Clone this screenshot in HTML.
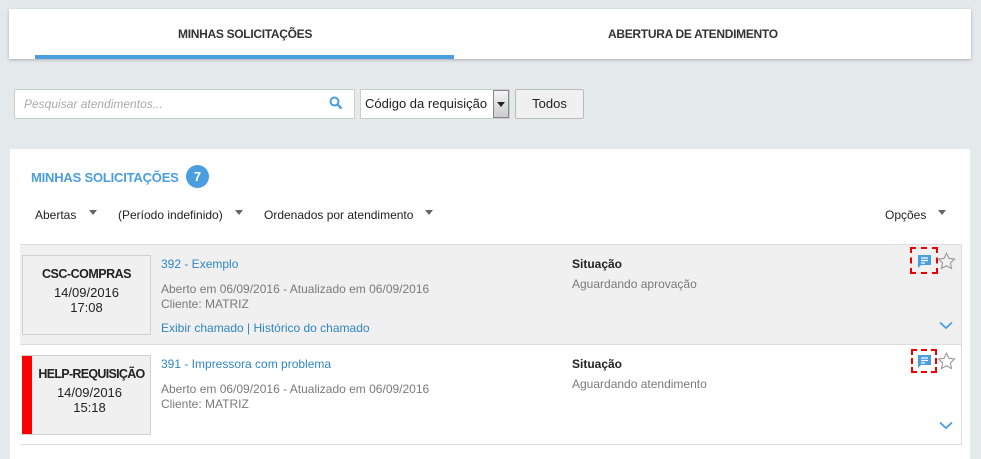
<!DOCTYPE html>
<html><head><meta charset="utf-8"><style>
*{margin:0;padding:0;box-sizing:border-box}
html,body{width:981px;height:450px}
body{background:#e4e9ec;font-family:"Liberation Sans",sans-serif;position:relative;overflow:hidden;color:#333}
.abs{position:absolute}
.tabs{left:9px;top:9px;width:962px;height:50px;background:#fff;box-shadow:0 1px 3px rgba(0,0,0,.25)}
.tab{font-weight:bold;font-size:12px;color:#333;letter-spacing:-.3px}
.card{left:10px;top:149px;width:960px;height:310px;background:#fff}
.blue{color:#2f86c4}
.gray{color:#7a7a7a}
.tri{display:inline-block;width:0;height:0;border-left:4px solid transparent;border-right:4px solid transparent;border-top:5px solid #666}
.datebox{width:129px;height:80px;background:#f0f0f0;border:1px solid #d0d0d0;text-align:center;font-size:13px;color:#222}
.f12{font-size:12px}
</style></head><body>
<div class="abs tabs"></div>
<div class="abs tab" style="left:178px;top:27px">MINHAS SOLICITAÇÕES</div>
<div class="abs tab" style="left:608px;top:27px">ABERTURA DE ATENDIMENTO</div>
<div class="abs" style="left:35px;top:55px;width:419px;height:4px;background:#4a9ee0"></div>

<div class="abs" style="left:14px;top:89px;width:341px;height:30px;background:#fff;border:1px solid #ccc;border-radius:2px"></div>
<div class="abs" style="left:24px;top:97px;font-size:12px;font-style:italic;color:#aaa">Pesquisar atendimentos...</div>
<svg class="abs" style="left:329px;top:96px" width="14" height="14" viewBox="0 0 14 14"><circle cx="5.5" cy="5.5" r="4" fill="none" stroke="#4a9ee0" stroke-width="2"/><path d="M8.5 8.5L12.5 12.5" stroke="#4a9ee0" stroke-width="2.4"/></svg>
<div class="abs" style="left:360px;top:89px;width:150px;height:30px;background:#fff;border:1px solid #ccc"></div>
<div class="abs" style="left:365px;top:96px;font-size:13px;color:#222">Código da requisição</div>
<div class="abs" style="left:493px;top:90px;width:16px;height:28px;background:linear-gradient(#f4f4f4,#ccc);border:1px solid #888"></div>
<div class="abs tri" style="left:497px;top:102px;border-top-color:#222"></div>
<div class="abs" style="left:515px;top:89px;width:69px;height:30px;background:#f0f0f0;border:1px solid #bbb;border-radius:2px;text-align:center;line-height:28px;font-size:13px;color:#222">Todos</div>

<div class="abs card"></div>
<div class="abs blue" style="left:31px;top:170px;font-size:13px;font-weight:bold;color:#4a9ee0;letter-spacing:-.2px">MINHAS SOLICITAÇÕES</div>
<div class="abs" style="left:186px;top:165px;width:23px;height:23px;border-radius:50%;background:#4a9ee0;color:#fff;font-weight:bold;font-size:13px;text-align:center;line-height:23px">7</div>
<div class="abs f12" style="left:35px;top:208px;color:#222">Abertas</div><div class="abs tri" style="left:89px;top:210px"></div>
<div class="abs f12" style="left:118px;top:208px;color:#222">(Período indefinido)</div><div class="abs tri" style="left:235px;top:210px"></div>
<div class="abs f12" style="left:264px;top:208px;color:#222">Ordenados por atendimento</div><div class="abs tri" style="left:425px;top:210px"></div>
<div class="abs f12" style="left:885px;top:208px;color:#222">Opções</div><div class="abs tri" style="left:938px;top:210px"></div>

<div class="abs" style="left:20px;top:244px;width:942px;height:101px;background:#f0f0f0;border-top:1px solid #ddd;border-bottom:1px solid #ddd;border-right:1px solid #ddd"></div>
<div class="abs" style="left:20px;top:345px;width:942px;height:100px;background:#fff;border-bottom:1px solid #ddd;border-right:1px solid #ddd"></div>

<div class="abs datebox" style="left:22px;top:255px"><div style="margin-top:11px;font-weight:bold;letter-spacing:-.5px;font-size:12.5px">CSC-COMPRAS</div><div style="margin-top:4px">14/09/2016</div><div style="margin-top:0">17:08</div></div>
<div class="abs datebox" style="left:22px;top:355px"><div style="margin-top:11px;font-weight:bold;letter-spacing:-.7px;padding-left:10px;font-size:12.5px">HELP-REQUISIÇÃO</div><div style="margin-top:4px;padding-left:6px">14/09/2016</div><div style="margin-top:0;padding-left:6px">15:18</div></div>
<div class="abs" style="left:22px;top:356px;width:10px;height:78px;background:#f00"></div>

<div class="abs f12 blue" style="left:161px;top:257px">392 - Exemplo</div>
<div class="abs f12 gray" style="left:161px;top:282px;line-height:15px">Aberto em 06/09/2016 - Atualizado em 06/09/2016<br>Cliente: MATRIZ</div>
<div class="abs f12 blue" style="left:161px;top:321px">Exibir chamado | Histórico do chamado</div>
<div class="abs f12 blue" style="left:161px;top:357px">391 - Impressora com problema</div>
<div class="abs f12 gray" style="left:161px;top:382px;line-height:15px">Aberto em 06/09/2016 - Atualizado em 06/09/2016<br>Cliente: MATRIZ</div>

<div class="abs f12" style="left:572px;top:257px;font-weight:bold;color:#222">Situação</div>
<div class="abs f12 gray" style="left:572px;top:277px">Aguardando aprovação</div>
<div class="abs f12" style="left:572px;top:357px;font-weight:bold;color:#222">Situação</div>
<div class="abs f12 gray" style="left:572px;top:377px">Aguardando atendimento</div>

<div class="abs" style="left:910px;top:247px;width:28px;height:27px;border:2px dashed #e00"></div>
<div class="abs" style="left:911px;top:349px;width:26px;height:24px;border:2px dashed #e00"></div>
<svg class="abs" style="left:917px;top:254px" width="15" height="15" viewBox="0 0 15 15"><path d="M1 1h13v10H4l-3 3z" fill="#4a9ee0"/><path d="M4 4h7M4 6.5h7M4 9h4" stroke="#fff" stroke-width="1.2"/></svg>
<svg class="abs" style="left:917px;top:354px" width="15" height="15" viewBox="0 0 15 15"><path d="M1 1h13v10H4l-3 3z" fill="#4a9ee0"/><path d="M4 4h7M4 6.5h7M4 9h4" stroke="#fff" stroke-width="1.2"/></svg>
<svg class="abs" style="left:937px;top:252px" width="19" height="18" viewBox="0 0 24 23"><path d="M12 1.5l3.1 6.6 7.2.9-5.3 5 1.4 7.1L12 17.6l-6.4 3.5 1.4-7.1-5.3-5 7.2-.9z" fill="none" stroke="#999" stroke-width="1.4"/></svg>
<svg class="abs" style="left:937px;top:352px" width="19" height="18" viewBox="0 0 24 23"><path d="M12 1.5l3.1 6.6 7.2.9-5.3 5 1.4 7.1L12 17.6l-6.4 3.5 1.4-7.1-5.3-5 7.2-.9z" fill="none" stroke="#999" stroke-width="1.4"/></svg>
<svg class="abs" style="left:939px;top:321px" width="14" height="9" viewBox="0 0 14 9"><path d="M1 1.5l6 5.5 6-5.5" fill="none" stroke="#4a9ee0" stroke-width="1.8"/></svg>
<svg class="abs" style="left:939px;top:421px" width="14" height="9" viewBox="0 0 14 9"><path d="M1 1.5l6 5.5 6-5.5" fill="none" stroke="#4a9ee0" stroke-width="1.8"/></svg>
</body></html>
